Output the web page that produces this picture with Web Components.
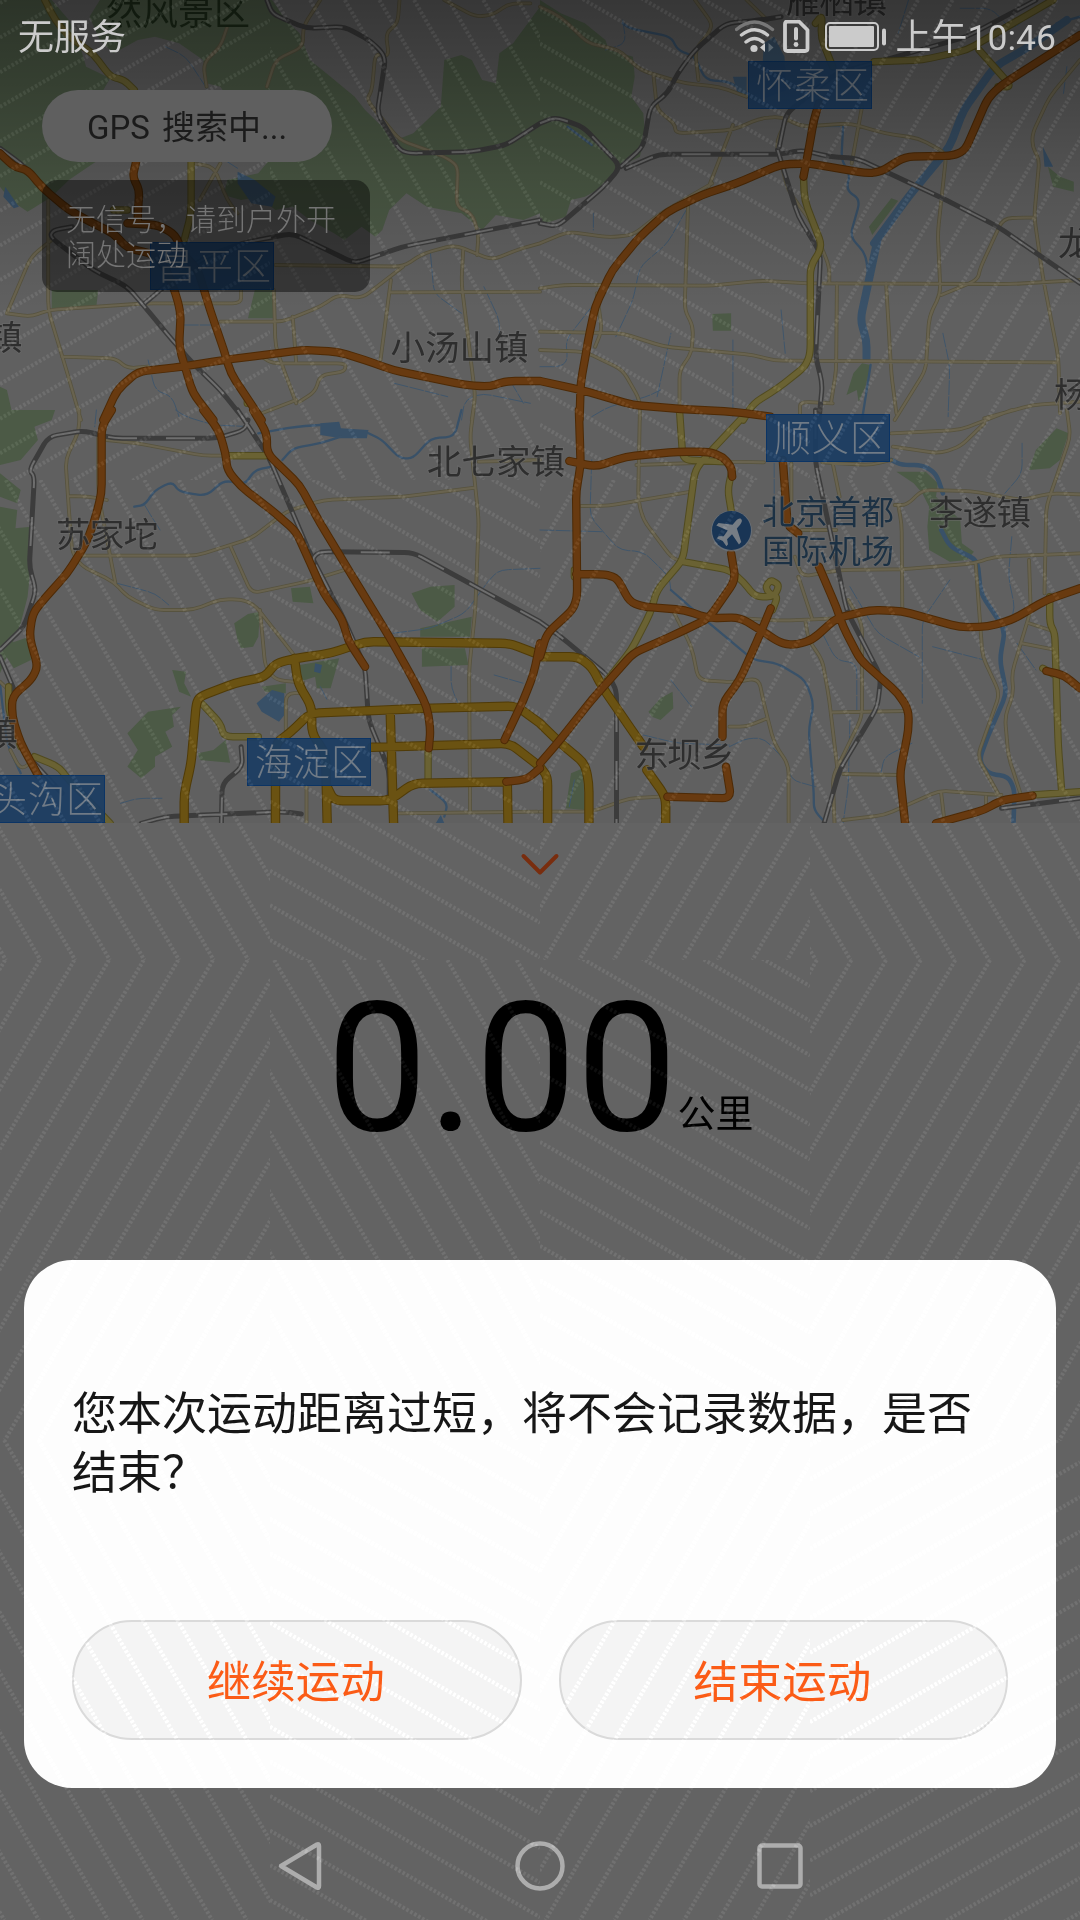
<!DOCTYPE html>
<html lang="zh-CN">
<head>
<meta charset="utf-8">
<title>运动</title>
<style>
html,body{margin:0;padding:0;background:#636363}
body{width:1080px;height:1920px;overflow:hidden;font-family:Roboto,"Noto Sans CJK SC",sans-serif}
</style>
</head>
<body>
<workout-screen></workout-screen>
<script>
const shadow = (el, html) => { el.attachShadow({mode:'open'}).innerHTML = html; return el.shadowRoot; };

const SHEETS = {A:[0,0],B:[540,0],C:[0,410],D:[540,410]};
const toMap = (sheet, str) => str.trim().split(' ').map(p => {
  const [x,y] = p.split(',').map(Number);
  return [SHEETS[sheet][0] + x/2.9037, SHEETS[sheet][1] + y/3];
});
const f1 = n => n.toFixed(1);
const smooth = pts => {
  let d = `M${f1(pts[0][0])} ${f1(pts[0][1])}`;
  for (let i=1;i<pts.length-1;i++){
    const [px,py]=pts[i-1],[x,y]=pts[i],[nx,ny]=pts[i+1];
    const a=Math.min(.4,9/Math.hypot(x-px,y-py)), b=Math.min(.4,9/Math.hypot(nx-x,ny-y));
    d += `L${f1(x+(px-x)*a)} ${f1(y+(py-y)*a)}Q${f1(x)} ${f1(y)} ${f1(x+(nx-x)*b)} ${f1(y+(ny-y)*b)}`;
  }
  const l = pts[pts.length-1];
  return d + `L${f1(l[0])} ${f1(l[1])}`;
};
const lines = o => Object.entries(o).map(([s,t]) => t.split('|').map(x => smooth(toMap(s,x))).join('')).join('');
const areas = o => Object.entries(o).map(([s,t]) => t.split('|').map(x => 'M'+toMap(s,x).map(p=>p.map(f1).join(' ')).join('L')+'Z').join('')).join('');

const GREEN = {
A:'0,0 150,0 200,60 230,130 250,200 320,235 300,270 300,470 250,505 200,540 150,590 80,635 30,600 0,560|290,0 790,0 830,60 870,100 900,180 960,230 1030,290 1060,330 1110,380 1150,420 1200,400 1280,320 1290,180 1340,165 1370,180 1400,240 1440,250 1450,160 1490,130 1568,20 1568,640 1520,660 1440,645 1400,690 1340,640 1240,620 1180,580 1130,630 1110,690 1090,710 1050,680 1000,720 970,700 900,660 850,620 800,630 750,590 700,600 650,585 660,540 750,520 790,470 750,430 640,260 600,250 590,180 520,130 450,110 400,120 330,160 290,120 260,50|150,870 285,870 280,918 150,925|740,870 800,870 795,955 720,955|0,1160 20,1170 40,1260 0,1260|90,1250 160,1230 150,1260 60,1260',
B:'0,0 60,40 130,70 190,120 200,150 270,170 275,230 265,290 300,340 305,400 290,470 230,500 215,520 185,560 130,590 90,600 75,650 0,675|500,942 555,940 555,992 502,992|1020,595 1040,602 965,705 955,680|1475,500 1510,530 1550,545 1550,575 1490,560|935,1090 960,1095 945,1160 925,1205 920,1170 890,1185 910,1120',
C:'0,0 160,0 150,30 100,50 110,90 60,150 0,165|0,190 60,240 50,280 0,260|0,290 50,300 45,355 90,350 90,460 80,560 60,640 0,790|0,710 85,680 90,750 40,775|680,640 720,612 755,605 750,680 735,710 700,715 690,690|845,535 900,530 910,580 850,575|1195,550 1250,530 1320,525 1320,590 1270,635 1220,600|1220,655 1370,620 1365,680 1220,680|1225,715 1350,715 1360,765 1225,770|870,765 985,745 960,835 920,835 915,800 870,815|500,780 540,785 535,820 555,860 520,845|525,890 500,915 505,950 480,965 500,1010 450,1040 450,1070 410,1105 370,1070 400,1020 370,970 430,905|575,1030 620,1020 655,990 668,1058 580,1050|760,830 830,820 830,850 770,845',
D:'1035,185 1120,185 1155,220 1150,260 1220,330 1225,400 1260,425 1240,450 1190,455 1130,420 1125,350 1130,290 1110,250 1085,220|1500,55 1535,70 1510,150 1480,175 1420,180 1440,120|385,845 387,895 350,930 325,920 315,905 350,865|90,1090 125,1075 130,1200 75,1195'};
const LAKES = {
A:'690,515 740,540 800,590 790,620 730,610 690,550|15,560 55,620 40,625 10,590',
B:'650,130 680,110 710,170 715,270 640,300|560,230 600,230 600,290 575,285|1460,440 1490,500 1465,500',
C:'930,40 985,35 990,55 1070,60 1065,85 990,85 930,75|790,840 825,850 830,910 810,935 760,905 745,880|915,760 935,765 930,790 912,785|1280,1215 1290,1240 1265,1240'};
const MINOR = {
A:'930,0 880,80 880,140 800,180 775,260|1160,0 1155,70 1120,100 1130,170 1090,160 1080,270 1065,300 1160,420 1240,450 1300,475 1330,500 1325,620 1370,640 1390,700 1385,765|1568,730 1500,750 1430,780 1320,735 1230,760 1170,800 800,795|1290,0 1380,50 1430,45 1480,10 1540,10|660,80 640,140 590,190 600,260|20,940 90,770 150,720|20,940 90,950 140,930 420,910 700,910 700,870|140,600 140,930 190,1100 235,1260|180,1070 335,1075 370,1105 430,1100|640,965 820,965 930,920 980,885 1050,895 1170,800|795,870 800,1040 860,1210|860,1200 760,1240|1135,840 1105,1080|1135,877 1568,875|1345,750 1340,850 1380,1190 1370,1260|760,1070 790,1090 1005,1090 1000,1115 930,1125 915,1175 870,1205|850,950 860,1090|560,490 620,500 660,600 690,640|640,490 580,600',
B:'0,20 60,50 140,130 230,150 290,210 420,250 520,260 600,290|450,0 500,70 490,100 450,150 460,240|600,0 660,60|330,230 340,330 390,370 395,400 560,390 640,355 700,350 760,380 900,370 1000,400 1100,415 1180,460 1155,700 1163,880 1130,950 1120,1110 1030,1260|560,375 490,560|0,730 80,695 200,712 270,705 350,640 500,550|430,610 420,930 445,980 440,1060 405,1110 405,1260|0,865 70,855 500,857 640,842 780,850 1370,852 1568,840|0,995 240,1000 360,1040 620,1065 680,1082 1505,1087|0,1050 130,1055 240,1110 290,1200 290,1260|165,880 180,990 160,1040|862,850 860,1110 845,1210|1005,850 1020,1120 1035,1240|1568,180 1480,290 1430,400 1430,440 1450,480 1435,650 1460,830 1505,1070 1510,1240|1435,652 1345,655 1280,800 1270,840 1165,885|935,320 905,490|720,350 685,430 720,570 790,670 840,800 840,850|755,1240 755,1205 850,1210|1568,1205 1430,1215 1290,1255',
C:'230,0 230,60 190,150 200,300 210,430 240,470 330,515 370,560 450,600 560,600 640,568 700,568 740,585 850,730|200,258 260,260 310,270|285,80 285,250 335,520|310,90 400,100 590,137 650,137|240,437 570,437 730,385 830,305 940,270 1170,260 1380,233|670,410 730,550 890,515 1000,480|1375,0 1365,80 1390,330 1380,600 1362,780 1365,1200|755,600 770,770 800,810 880,818|890,848 830,850 830,960|1150,1210 1560,1205|890,1130 890,1240|1390,155 1568,150|0,815 25,840|30,1020 60,1080 100,1050',
D:'290,0 285,270 300,330 380,440 410,455|120,288 200,287 440,245|280,165 560,155 650,157|820,157 960,165 1020,150|850,160 870,260|730,160 730,280|0,1205 150,1205 260,1165 350,1160|390,610 440,710 460,810 560,817 635,805 650,880 680,1000 722,1065 722,1240|550,950 600,950 660,925|590,625 700,632 860,625|770,630 780,690 820,750 840,870 865,1090|750,500 790,625|740,440 760,500 870,480 1050,478 1260,460 1320,440 1568,430|1040,285 1050,340 1052,600|1030,285 1065,285 1110,240 1250,243 1400,270 1480,250 1568,253|1020,70 1220,60 1370,0|1025,110 1160,130 1220,110 1290,40|1530,0 1540,80 1470,290 1465,550|1265,460 1285,740 1335,850 1270,1040 1330,1150|1420,450 1425,600 1370,790 1375,850 1350,920 1360,1040 1395,1150|1420,640 1480,660|1400,700 1490,718|850,907 1060,903|880,1092 1040,1095|895,570 935,640 935,920 850,1100 855,1240|880,1230 1000,1215 1160,1142 1340,1155|1165,1150 1175,1240|1295,1160 1295,1190|760,360 860,360'};
const RAIL = {
A:'775,0 790,40 830,60 890,85 1000,80 1080,125 1120,170 1095,340 1160,450 1190,460 1370,455 1470,435 1568,370|210,680 155,690 145,710 270,810 370,860 420,920 500,1020 560,1090 640,1170 710,1260|420,910 500,840 600,770 700,730 850,700 1030,790 1170,740 1568,660|0,445 60,490 110,540',
B:'0,370 45,352 125,380 235,500 185,560 50,680 0,670|235,500 300,440 320,320 370,280 400,220 450,150 540,70 640,60 700,50|250,505 345,463 700,463 760,450 840,470 920,475 1160,590 1330,680 1568,850|695,440 715,340 860,220 1000,180 1240,110 1440,0|690,450 750,650 815,760 800,1070 820,1150 810,1260',
C:'0,720 70,650 105,540 85,470 100,200 85,180 140,80 240,62 330,85 630,85 710,60 720,30|0,740 45,850|100,1060 180,1150|690,0 780,140 900,430 1000,630 1060,770 1070,930 1130,1080 1130,1170|910,470 910,440 930,425 1200,428 1390,535 1568,635|700,1010 705,1070 645,1120 643,1240|410,1240 480,1220 820,1205 875,1212',
D:'0,635 60,680 200,800 222,840 222,1240|800,0 800,160 850,400 890,600 990,800 980,890 870,1080 825,1240|1340,1195 1568,1165'};
const GOLD = {
C:'535,1240 535,1150 555,1060 570,880 580,860 680,820 770,800 800,760 860,745 960,730 1060,695 1480,700 1568,735|855,745 865,820 905,890 905,970 945,1030 950,1240|950,1130 970,1172 1130,1172 1200,1120 1470,1115|800,1240 800,1000 840,970 900,910 1230,895 1500,888 1568,940|1133,905 1143,1240|1080,1012 1480,1000 1568,1070|1473,1115 1475,1240',
D:'0,740 110,740 150,770 180,830 280,980 300,1010|310,1080 365,1160 365,1240|0,940 60,1000 130,1060 142,1120 142,1240|0,1070 22,1100 22,1240'};
const YELLOW = {
A:'130,0 160,60 200,110 270,160 320,230 360,240 390,270|555,487 555,640 535,720|330,630 370,630|718,1205 718,1210',
B:'800,70 820,45 815,110 850,200|970,185 1110,180 1240,150 1490,0|1275,150 1370,260 1330,260|765,530 768,600 820,740 785,800 785,1060 770,1100 690,1165 620,1210 590,1260',
C:'655,137 770,137|585,880 640,940 650,980 750,980|100,1040 170,1070 200,1110 320,1240|1243,1015 1243,1110|25,830 25,900 60,1010',
D:'405,0 415,150 540,155|590,20 490,130 450,180 415,450 340,540 320,610 265,720 180,830|415,455 550,480 590,515 625,560 680,560 695,525 670,510 655,530 665,550 690,560 675,600|558,180 545,240 555,300|1480,560 1480,640 1495,670 1505,1010 1515,1145|1430,1155 1568,1145|1460,775 1495,795|100,480 100,500'};
const ORANGE = {
A:'0,460 40,500 80,510 125,565 200,630 270,670 330,700 370,745 440,760 480,800 510,880 525,940 520,1040 540,1110 560,1180 620,1260|395,487 385,530 405,570 400,640 400,670|370,670 460,675 510,705 530,760 575,810 610,930 650,1050 670,1120 760,1260|300,1260 340,1170 400,1115 530,1100 650,1080 880,1050 980,1055 1060,1080 1140,1110 1350,1155 1420,1160 1470,1143 1568,1143',
B:'0,1143 120,1170 270,1215 410,1227 560,1235 670,1250|115,1260 118,1150 140,1020 160,920 210,810 290,710 370,635 470,585 570,550 700,493 780,490 950,520 990,515 1060,470 1200,467 1235,450 1300,295 1340,255 1568,105|765,530 780,450 795,360 810,310',
C:'325,0 295,50 295,250 275,330 250,400 195,490 130,565 95,610 85,680 110,770 90,810 35,860 35,920 60,1000 110,1095|590,0 635,60 655,130 660,180 700,230 800,310 860,365 910,480 940,550 995,630 1010,690 1060,770|735,0 775,70 775,130 870,225 930,340 1030,510 1130,680 1190,790 1240,890 1250,960 1245,1015|1568,700 1550,790 1520,870 1465,990|1568,1075 1530,1108 1470,1115',
D:'113,0 118,170 105,240 108,560 95,600 20,670 0,740|85,153 160,170 250,140 400,125 490,125 530,140 555,170 558,200|705,150 712,250 718,330|725,350 750,370|555,430 568,510 490,625 400,670 270,730 150,870 50,1000 0,1060|105,493 190,493 225,505 260,575 300,590 420,600 490,625 580,622 640,660 700,700 740,705 790,690 860,625 960,600 1050,603 1220,652 1300,650 1370,630 1470,570 1568,535|670,595 640,670 580,810 530,880 530,980|540,1070 555,1165 370,1160|810,470 860,590 880,650 930,750 1040,850 1070,900 1070,960 1045,1090 1060,1240|1150,1240 1290,1200 1340,1170 1430,1157|1470,783 1520,795 1568,835'};
const RIVER = {
B:'1530,60 1420,140 1320,200 1230,330 1190,440 1070,590 970,730|980,720 955,840 930,960 948,1020 948,1075'};
const TRUNK = {
D:'1020,150 1050,165 1110,165 1150,190 1170,250|1165,360 1190,410 1270,450 1280,550 1350,660 1335,750 1355,850 1300,980 1275,1050 1300,1090 1360,1100 1378,1140 1375,1240'};
const STREAM = {
B:'240,70 260,85 380,110 400,150 450,170 480,240 550,245 600,280|880,380 875,480 900,520 890,570 930,600 900,710 945,760 955,840|960,1095 935,1260|1568,50 1500,70|80,380 150,435',
C:'750,70 860,50 930,45|1070,70 1110,90 1160,145 1200,145 1250,85 1320,80 1340,0|820,150 850,115 930,100 990,80|390,290 420,285 450,240 500,215 520,245 600,258 650,210 710,225 740,180 790,170|1250,1140 1300,1180 1290,1220|0,820 20,1000 60,1090',
D:'380,540 480,630 620,750 690,760 770,810 795,880 780,960 795,1150 795,1200 830,1240'};
const BROOK = {
A:'430,1080 450,1170 500,1190 520,1250|1250,760 1260,880 1340,940|1405,860 1450,960 1450,1010|1340,1260 1350,1200 1400,1180 1540,1210|480,140 540,170 600,265|690,505 660,485|535,975 615,975|1145,1150 1300,1190|1480,1140 1520,1210',
B:'430,620 370,730 290,800 270,900 220,1010|870,380 800,380|155,640 155,690|700,930 712,1060|560,1020 560,1250|340,1190 380,1000|1170,1000 1190,1100 1185,1250|0,1100 60,1100 80,1080 75,1020 150,920|150,1250 200,1220 310,1190 350,1170|240,60 250,130 190,150|1070,0 1040,100|1220,25 1310,25 1370,90 1430,40|1530,200 1520,280',
C:'420,285 440,320 465,360|340,520 450,550 490,585|1140,670 1250,655 1350,610 1420,510 1450,480 1568,475|1310,770 1310,830 1330,880|350,1180 400,1165 470,1165|510,0 540,20 620,45 730,50|1435,795 1520,820|280,0 275,50|930,830 950,870',
D:'150,150 145,320 230,420 300,425 375,500 380,540|0,360 180,365|1370,380 1360,500 1380,600 1350,660|900,530 980,670 1100,740|1190,510 1110,630 1110,880|550,1010 600,985 650,985 720,1060 730,1110 800,1130|900,930 895,1130 880,1240|100,1110 85,1190|300,975 400,1000 550,1005|1400,100 1400,190 1350,250|680,160 680,300|1140,710 1290,750|820,670 860,750 920,760 920,900|380,810 440,890|1080,1000 1000,1040 990,1090|1385,700 1440,780'};

const town = (t,x,cy,w,s=34.5,c='town') => `<text class="${c}" x="${x}" y="${cy+s*.37}" font-size="${s}"${w?` textLength="${w}"`:''}>${t}</text>`;
const district = (t,x,y,w=124,tx=8) => `<rect x="${x+.5}" y="${y+.5}" width="${w-1}" height="47" fill="#1b3c62" fill-opacity=".93" stroke="#0b3465"/><text class="dist" x="${x+tx}" y="${y+37.5}" font-size="37" textLength="113">${t}</text>`;

customElements.define('city-map', class extends HTMLElement {
  connectedCallback(){
    const road = (d,edge,fill,w,e=1.4) => `<path d="${d}" stroke="${edge}" stroke-width="${w}"/><path d="${d}" stroke="${fill}" stroke-width="${w-e*2}"/>`;
    const rail = lines(RAIL), stream = lines(STREAM);
    shadow(this, `<style>
:host{display:block;width:1080px;height:823px;overflow:hidden}
svg{display:block}
.l{fill:none;stroke-linecap:round;stroke-linejoin:round}
text{font-family:"Noto Sans CJK SC",sans-serif;font-weight:400}
.town{fill:#2e2e2e;stroke:#6b6b6b;stroke-width:2;paint-order:stroke;stroke-opacity:.5}
.park{fill:#1d2c19}
.air{fill:#1c3144;stroke:#6b6b6b;stroke-width:2;paint-order:stroke;stroke-opacity:.5}
.dist{fill:#6f7a86;font-weight:300}
</style>
<svg width="1080" height="823" viewBox="0 0 1080 823">
<defs><linearGradient id="fade" x1="0" y1="0" x2="0" y2="1"><stop offset="0" stop-color="#000" stop-opacity=".43"/><stop offset=".25" stop-color="#000" stop-opacity=".31"/><stop offset=".6" stop-color="#000" stop-opacity=".13"/><stop offset="1" stop-color="#000" stop-opacity="0"/></linearGradient></defs>
<rect width="1080" height="823" fill="#606060"/>
<path d="${areas(GREEN)}" fill="#4c5a46"/>
<path d="${areas(LAKES)}" fill="#385067"/>
<g class="l">
<path d="${lines(BROOK)}" stroke="#40566b" stroke-width="1" stroke-dasharray="14 2"/>
<path d="${stream}" stroke="#395168" stroke-width="2.3"/>
<path d="${lines(TRUNK)}" stroke="#395168" stroke-width="4.600"/>
<path d="${lines(RIVER)}" stroke="#395168" stroke-width="8"/>
${road(lines(MINOR),'#57533f','#69634f',3.8,.8)}
<path d="${rail}" stroke="#3c3c3c" stroke-width="5"/><path d="${rail}" stroke="#6e6e6e" stroke-width="2" stroke-dasharray="29 29" stroke-linecap="butt"/>
${road(lines(YELLOW),'#514b20','#6a6233',7.4,1)}
${road(lines(GOLD),'#503b08','#6a5212',9.4,1)}
${road(lines(ORANGE),'#4d2a06','#683a10',8.4,1)}
</g>
${town('然风景区',106,12,144,36,'park')}
${town('雁栖镇',786,0,101)}
${town('小汤山镇',390.5,347.5,138)}
${town('北七家镇',427,461,138)}
${town('苏家坨',56,534,102)}
${town('东坝乡',634.5,754,100)}
${town('李遂镇',929,512.5,102)}
${town('杨',1054,394)}${town('龙',1058,243)}${town('镇',-12,337)}${town('镇',-17,733)}
${town('北京首都',762,512,132,33,'air')}
${town('国际机场',762,550.5,132,33,'air')}
<circle cx="731.5" cy="531" r="20.5" fill="#6b7580" fill-opacity=".7"/><circle cx="731.5" cy="530.5" r="19.500" fill="#193555"/>
<path transform="translate(731.5 530.5) rotate(40)" d="M0-15c2 0 2.8 2.500 2.800 5v5l12 7.500v3.500l-12-3.500-.6 7 4 3.300v2.500l-6.200-1.700-6.200 1.700v-2.500l4-3.300-.6-7-12 3.500v-3.500l12-7.500v-5c0-2.500.8-5 2.800-5z" fill="#767d85"/>
${district('怀柔区',748,61)}${district('昌平区',150,242)}${district('顺义区',766,414)}${district('海淀区',247,738)}${district('头沟区',-19,775,124,9)}
<rect width="1080" height="310" fill="url(#fade)"/>
</svg>`);
  }
});

customElements.define('status-bar', class extends HTMLElement {
  connectedCallback(){
    shadow(this, `<style>
:host{display:flex;align-items:center;justify-content:space-between;height:74px;padding:2px 24px 0 18px;box-sizing:border-box;color:#cbcbcb;font-size:36px;line-height:72px}
.r{display:flex;align-items:center}
svg{display:block;margin-right:9px}
b{font-weight:400}.n{font-size:35.5px}
</style><span><slot name="carrier"></slot></span>
<span class="r"><svg width="152" height="36" viewBox="0 1 152 36" fill="none" stroke="#cbcbcb" stroke-width="3.400" stroke-linecap="round">
<path d="M1.500 10.500Q19.500-4.500 37.500 10.500" stroke="#777"/>
<path d="M6.500 16Q19.500 5.500 32.500 16M11 23Q19.500 16 28 23"/><circle cx="19" cy="29.500" r="3.600" fill="#cbcbcb" stroke="none"/>
<path d="M30 24v9l-5-4.500z" fill="#cbcbcb" stroke="none"/><path d="M33.500 24v9l5-4.500z" fill="#59656e" stroke="none"/>
<path d="M52.500 2.500H64L72.500 11V29.500q0 2.500-2.500 2.500H52.500q-2.500 0-2.500-2.500V5q0-2.500 2.500-2.500Z" stroke-linejoin="round" stroke-width="3.800"/><path d="M61 10v9.500" stroke-width="4"/><circle cx="61" cy="25.500" r="2.400" fill="#cbcbcb" stroke="none"/>
<rect x="91" y="4" width="52" height="27" rx="4" stroke-width="2"/><rect x="94" y="7" width="45" height="21" rx="1" fill="#cbcbcb" stroke="none"/><path d="M149 11.500v13" stroke-width="4"/>
</svg><b><slot name="period"></slot></b><b class="n"><slot name="time"></slot></b></span>`);
  }
});

customElements.define('gps-pill', class extends HTMLElement {
  connectedCallback(){
    shadow(this, `<style>:host{display:flex;align-items:center;justify-content:center;box-sizing:border-box;width:290px;height:72px;padding-bottom:3px;border-radius:36px;background:#5f5f5f;color:#1b1b1b;font-size:33px;white-space:pre;word-spacing:4px}</style><slot></slot>`);
  }
});
customElements.define('hint-toast', class extends HTMLElement {
  connectedCallback(){
    shadow(this, `<style>:host{display:block;box-sizing:border-box;width:328px;height:112px;padding:22px 24px;border-radius:15px;background:rgba(0,0,0,.43);color:#747474;font-size:30px;line-height:35px;font-weight:300;white-space:nowrap}</style><slot></slot>`);
  }
});

customElements.define('distance-panel', class extends HTMLElement {
  connectedCallback(){
    shadow(this, `<style>
:host{display:flex;flex-direction:column;align-items:center;height:437px;color:#000}
svg{display:block;margin-top:29px}
.v{display:flex;align-items:baseline;margin-top:85px;height:211px;line-height:211px}
.n{font-size:180px}.u{font-size:38px;line-height:38px;padding-bottom:3px;transform:translateY(-3px)}
</style><svg width="40" height="26" fill="none" stroke="#792d0e" stroke-width="4" stroke-linecap="round" stroke-linejoin="round"><path d="M3.500 4 20 20.500 36.500 4"/></svg>
<div class="v"><span class="n"><slot></slot></span><span class="u"><slot name="unit"></slot></span></div>`);
  }
});

customElements.define('pill-button', class extends HTMLElement {
  connectedCallback(){
    shadow(this, `<style>:host{display:flex;flex:1;align-items:center;justify-content:center;box-sizing:border-box;height:120px;border:2px solid #dadada;border-radius:60px;background:#f4f4f4;color:#fb5b16;font-size:44.500px;padding:0 2px 3px 0}</style><slot></slot>`);
  }
});
customElements.define('confirm-dialog', class extends HTMLElement {
  connectedCallback(){
    shadow(this, `<style>
:host{display:flex;flex-direction:column;justify-content:space-between;box-sizing:border-box;height:528px;margin:0 24px;padding:125px 48px 48px;border-radius:48px;background:#fdfdfd;color:#161616}
.m{font-size:45px;line-height:59px}
.a{display:flex;gap:37px}
</style><div class="m"><slot></slot></div><div class="a"><slot name="action"></slot></div>`);
  }
});
customElements.define('nav-keys', class extends HTMLElement {
  connectedCallback(){
    shadow(this, `<style>
:host{display:grid;grid-template-columns:repeat(3,240px);justify-content:center;align-items:center;justify-items:center;height:132px}
svg{display:block;margin-top:24px}
</style>
${['<path d="M9 28 45 6.500q2-1 2 1.500v40q0 2.500-2 1.500Z"/>','<circle cx="28" cy="28" r="22.500"/>','<rect x="7.500" y="7.500" width="41" height="41" rx="2.500"/>'].map(p=>`<svg width="56" height="56" fill="none" stroke="#adadad" stroke-width="4.500" stroke-linejoin="round">${p}</svg>`).join('')}`);
  }
});

/* Dotted hatch: a 4x4 grid of tiles. Each tile has a slope direction and a phase. */
customElements.define('dotted-hatch', class extends HTMLElement {
  connectedCallback(){
    const P=34.641, R=1.7321;
    const tiles=[['f/',3],['s\\',33],['f\\',9],['s/',17.3],
                 ['s\\',5.8],['f\\',22],['s/',25],['s\\',19],
                 ['s/',5],['s\\',31.7],['f\\',33.5],['s/',20],
                 ['s\\',4.2],['f\\',12],['s/',26],['f/',7.3]];
    let out='';
    tiles.forEach(([k,c],i)=>{
      const x0=(i%4)*270,y0=(i>>2)*480,x1=x0+270,y1=y0+480,sg=k[1]==='/'?-1:1;
      let d='';
      for(let n=-60;n<110;n++){
        const q=c+n*P;
        let a,b;
        if(k[0]==='s'){a=[q+sg*y0/R,y0];b=[q+sg*y1/R,y1];if(Math.max(a[0],b[0])<x0||Math.min(a[0],b[0])>x1)continue;}
        else{a=[x0,q+sg*x0/R];b=[x1,q+sg*x1/R];if(Math.max(a[1],b[1])<y0||Math.min(a[1],b[1])>y1)continue;}
        d+=`M${f1(a[0])} ${f1(a[1])}L${f1(b[0])} ${f1(b[1])}`;
      }
      out+=`<svg x="${x0}" y="${y0}" width="270" height="480" viewBox="${x0} ${y0} 270 480"><path d="${d}"/></svg>`;
    });
    shadow(this, `<style>:host{display:block;position:absolute;inset:0;pointer-events:none;mix-blend-mode:plus-lighter}svg{display:block}path{fill:none;stroke:#0e0e0e;stroke-width:4;stroke-dasharray:2.600 1.900}</style><svg width="1080" height="1920">${out}</svg>`);
  }
});

customElements.define('workout-screen', class extends HTMLElement {
  connectedCallback(){
    shadow(this, `<style>
:host{display:flex;flex-direction:column;position:relative;isolation:isolate;width:1080px;height:1920px;background:#636363;overflow:hidden}
.map{display:grid}
.map>*{grid-area:1/1}
.over{display:flex;flex-direction:column;z-index:1}
.over gps-pill{margin:16px 0 0 42px}
.over hint-toast{margin:18px 0 0 42px}
</style>
<div class="map"><city-map></city-map>
<div class="over"><status-bar><span slot="carrier">无服务</span><span slot="period">上午</span><span slot="time">10:46</span></status-bar>
<gps-pill>GPS 搜索中...</gps-pill><hint-toast>无信号，请到户外开<br>阔处运动</hint-toast></div></div>
<distance-panel>0.00<span slot="unit">公里</span></distance-panel>
<confirm-dialog>您本次运动距离过短，将不会记录数据，是否<br>结束？<pill-button slot="action">继续运动</pill-button><pill-button slot="action">结束运动</pill-button></confirm-dialog>
<nav-keys></nav-keys>
<dotted-hatch></dotted-hatch>`);
  }
});
</script>
</body>
</html>
